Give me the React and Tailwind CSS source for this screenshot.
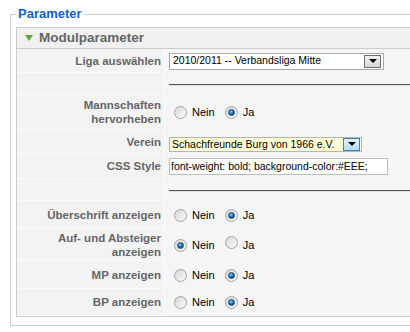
import React from 'react';

function Radio({ checked }) {
  return (
    <span className="inline-flex items-center justify-center w-[13px] h-[13px] rounded-full border border-[#a3a3a3] bg-[linear-gradient(135deg,#d8d8d8,#fbfbfb)] shrink-0">
      {checked && (
        <span className="w-[7px] h-[7px] rounded-full bg-[radial-gradient(circle_at_40%_35%,#8fd0f5,#0b62a8_55%,#053a6b)] border border-[#2a4d6e]" />
      )}
    </span>
  );
}

function YesNo({ value }) {
  return (
    <div className="flex items-center pl-[5px] text-[11px] text-black">
      <Radio checked={value === 'no'} />
      <span className="ml-[5px]">Nein</span>
      <span className="ml-[10px]"><Radio checked={value === 'yes'} /></span>
      <span className="ml-[5px]">Ja</span>
    </div>
  );
}

function Arrow() {
  return <span className="w-0 h-0 border-l-[4px] border-r-[4px] border-t-[4px] border-l-transparent border-r-transparent border-t-black mt-[3px]" />;
}

function Row({ label, h, children }) {
  return (
    <div className="flex">
      <div
        className="w-[148px] shrink-0 border-r border-b border-[#fbfbfb] bg-[#f3f3f3] text-right pr-[3px] text-[11.5px] leading-[14px] font-bold text-[#666] flex items-center justify-end"
        style={{ height: h }}
      >
        <span>{label}</span>
      </div>
      <div className="flex-1 flex items-center pl-[4px] bg-[#f5f5f5]">{children}</div>
    </div>
  );
}

function Rule() {
  return <div className="w-full h-[2px] border-t border-[#555] border-b border-b-[#e0e0e0] mt-[2px]" />;
}

export default function App() {
  return (
    <div className="w-[410px] h-[332px] overflow-hidden bg-white font-['Liberation_Sans',Arial,sans-serif]">
      <div className="pl-[10px] pt-[6px] w-[440px]">
        <fieldset className="border border-[#ccc] px-[5px] pt-[5px] pb-[8px]">
          <legend className="px-[2px] text-[13px] leading-[16px] font-bold text-[#1160c9]">Parameter</legend>
          <div className="border border-[#ccc]">
            <div className="h-[21px] bg-[#f0f0f0] border-b border-[#ccc] flex items-center pl-[8px]">
              <span className="w-0 h-0 border-l-[4.5px] border-r-[4.5px] border-t-[6px] border-l-transparent border-r-transparent border-t-[#6aa23a]" />
              <span className="ml-[6px] text-[13.5px] font-bold text-[#666] leading-[16px]">Modulparameter</span>
            </div>

            <Row label="Liga auswählen" h={24}>
              <div className="w-[215px] h-[17px] border border-[#a9a9a9] bg-white flex items-center pl-[3px] pr-[2px] text-[10.5px] text-black">
                <span className="flex-1">2010/2011 -- Verbandsliga Mitte</span>
                <span className="w-[17px] h-[13px] border border-[#6f6f6f] bg-[linear-gradient(#f2f2f2,#d6d6d6)] flex items-start justify-center">
                  <Arrow />
                </span>
              </div>
            </Row>

            <Row label="" h={22}>
              <Rule />
            </Row>

            <Row label={<>Mannschaften<br />hervorheben</>} h={35}>
              <YesNo value="yes" />
            </Row>

            <Row label="Verein" h={24}>
              <div className="w-[193px] h-[15px] mt-[5px] border border-[#b5b5b5] bg-[#ffffd6] flex items-center pl-[2px] pr-[1px] text-[10.5px] text-black">
                <span className="flex-1">Schachfreunde Burg von 1966 e.V.</span>
                <span className="w-[17px] h-[13px] border border-[#3c7fb1] bg-[linear-gradient(#e3f2fc,#b3dbf5)] flex items-start justify-center">
                  <Arrow />
                </span>
              </div>
            </Row>

            <Row label="CSS Style" h={25}>
              <div className="w-[219px] h-[17px] border border-[#bdbdbd] bg-white flex items-center pl-[1px] text-[10.5px] text-black">
                font-weight: bold; background-color:#EEE;
              </div>
            </Row>

            <Row label="" h={22}>
              <Rule />
            </Row>

            <Row label="Überschrift anzeigen" h={28}>
              <YesNo value="yes" />
            </Row>

            <Row label={<>Auf- und Absteiger<br />anzeigen</>} h={32}>
              <YesNo value="no" />
            </Row>

            <Row label="MP anzeigen" h={28}>
              <YesNo value="yes" />
            </Row>

            <Row label="BP anzeigen" h={27}>
              <YesNo value="yes" />
            </Row>
          </div>
        </fieldset>
      </div>
    </div>
  );
}
